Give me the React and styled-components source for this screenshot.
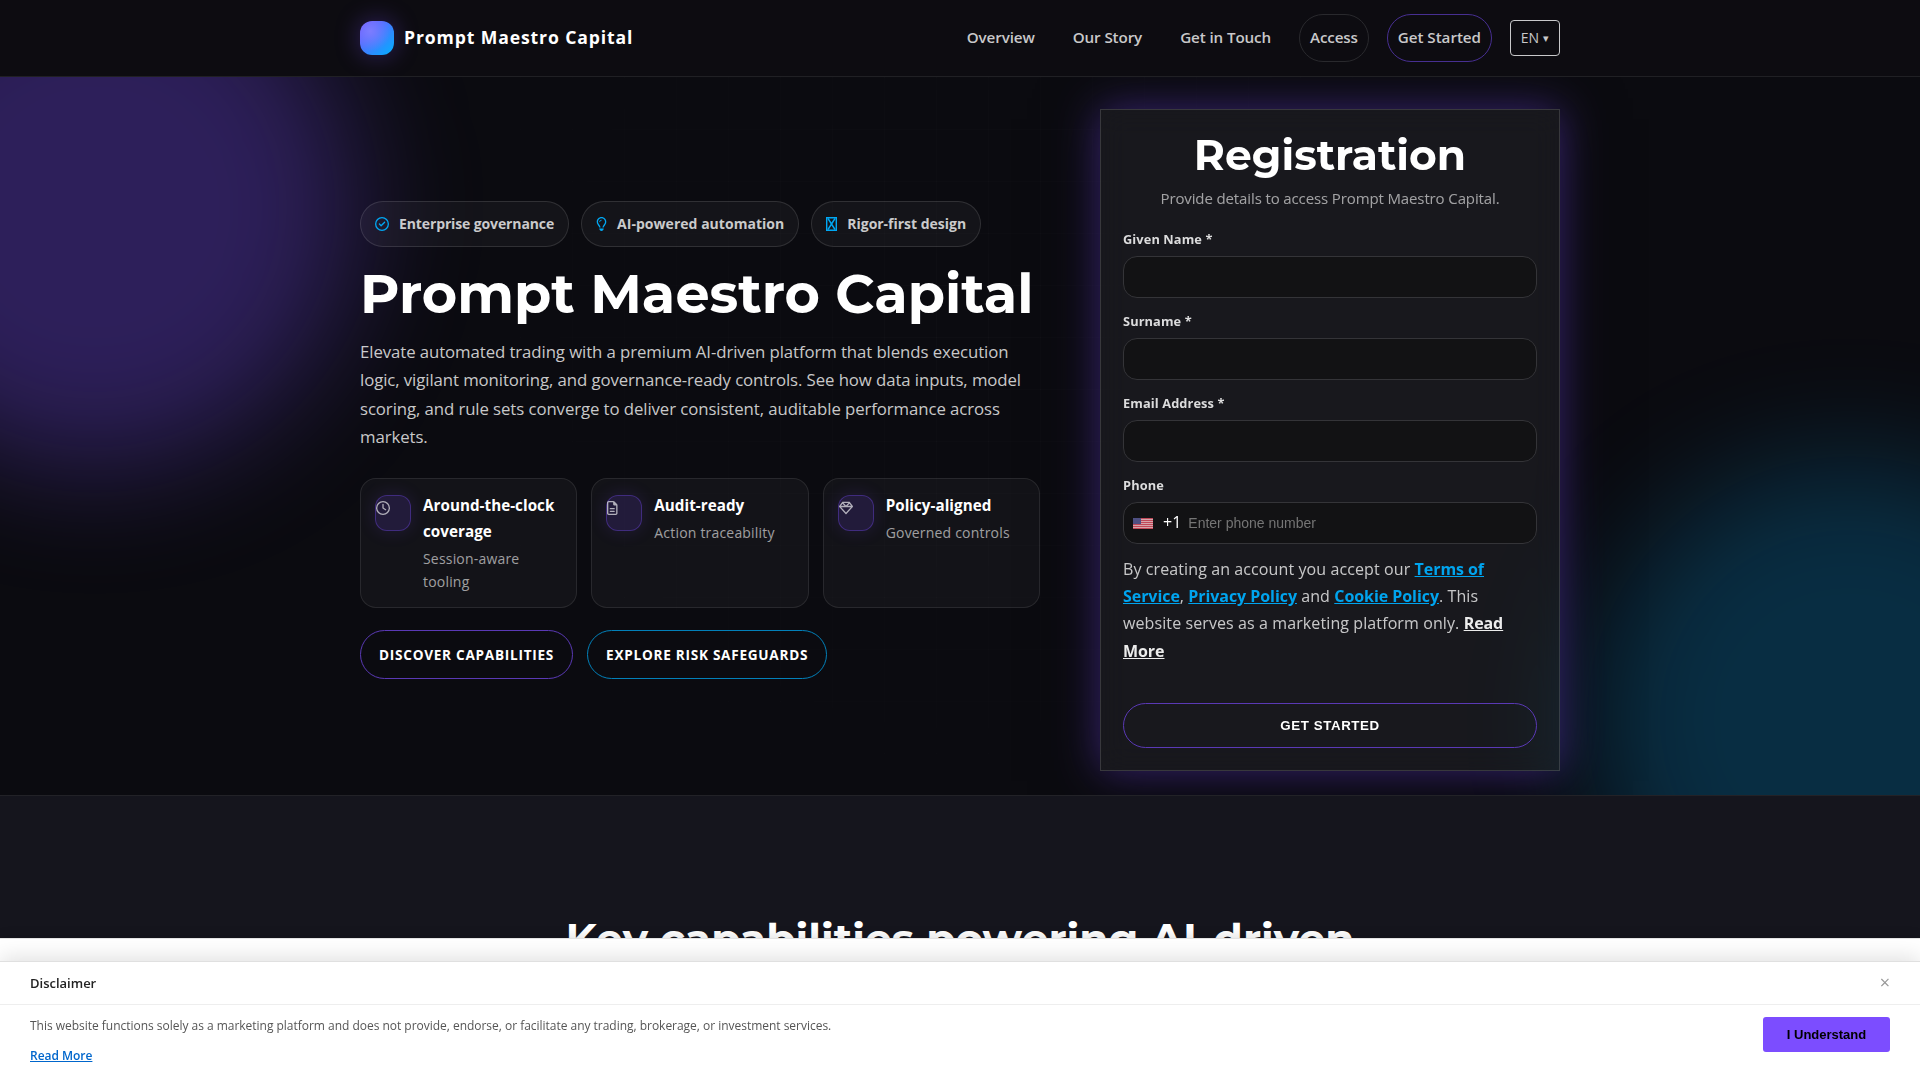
import React from "react";
import styled, { createGlobalStyle } from "styled-components";
import {
  FaRegCircleCheck,
  FaRegLightbulb,
  FaRegClock,
  FaRegFileLines,
  FaRegGem,
} from "react-icons/fa6";

const BODY = '"Open Sans", "Noto Sans", sans-serif';
const HEAD = 'Montserrat, Inter, "Open Sans", sans-serif';
const UI = '"Liberation Sans", Arial, sans-serif';

const GlobalStyle = createGlobalStyle`
  *, *::before, *::after { box-sizing: border-box; }
  html, body { margin: 0; height: 100%; overflow: hidden; }
  body {
    background: #0b0b10;
    color: #fff;
    font-family: ${BODY};
    font-size: 16px;
    line-height: 1.7;
  }
  h1, h2, p { margin: 0; }
`;

const Page = styled.div`
  height: 100vh;
  overflow: hidden;
  display: flex;
  flex-direction: column;
`;

const Header = styled.header`
  flex: none;
  height: 77px;
  border-bottom: 1px solid #202024;
  background: #0d0c11;
`;

const Container = styled.div`
  width: 1200px;
  margin: 0 auto;
`;

const HeaderRow = styled(Container)`
  height: 100%;
  display: flex;
  align-items: center;
  justify-content: space-between;
`;

const Brand = styled.div`
  display: flex;
  align-items: center;
  gap: 10px;
  font-size: 17.6px;
  font-weight: 700;
  letter-spacing: 0.88px;
`;

const BrandMark = styled.span`
  width: 34px;
  height: 34px;
  border-radius: 12px;
  background: radial-gradient(circle at 30% 30%, #7c7dff 0%, transparent 60%),
    linear-gradient(135deg, #7c4dff, #00b0ff);
  box-shadow: 0 0 24px rgba(124, 77, 255, 0.35);
`;

const Nav = styled.nav`
  display: flex;
  align-items: center;
  gap: 18px;
`;

const NavLink = styled.a`
  padding: 10px;
  font-size: 15.2px;
  font-weight: 600;
  letter-spacing: -0.11px;
  color: rgba(255, 255, 255, 0.78);
`;

const NavPill = styled(NavLink)`
  border: 1px solid ${(p) => (p.$accent ? "#472f92" : "#29292d")};
  border-radius: 999px;
  letter-spacing: ${(p) => (p.$accent ? "-0.04px" : "-0.16px")};
`;

const LangButton = styled.button`
  width: 50px;
  height: 36px;
  padding: 0 0 2px;
  display: flex;
  align-items: center;
  justify-content: center;
  gap: 4px;
  border: 1px solid #c8c8ca;
  border-radius: 4px;
  background: transparent;
  color: #c8c8ca;
  font-family: ${BODY};
  font-size: 14px;
`;

const Caret = styled.span`
  font-size: 11px;
`;

const Hero = styled.section`
  position: relative;
  flex: none;
  height: 719px;
  overflow: hidden;
  border-bottom: 1px solid #222227;
  background: #0b0b10;
`;

const Glow = styled.div`
  position: absolute;
  width: 520px;
  height: 520px;
  border-radius: 50%;
  filter: blur(60px);
`;

const VioletGlow = styled(Glow)`
  left: -165px;
  top: -130px;
  background: rgba(124, 77, 255, 0.31);
`;

const BlueGlow = styled(Glow)`
  right: -190px;
  bottom: -185px;
  background: rgba(0, 176, 255, 0.21);
`;

const GridLines = styled.div`
  position: absolute;
  inset: 0;
  background-image: linear-gradient(rgba(255, 255, 255, 0.016) 1px, transparent 1px),
    linear-gradient(90deg, rgba(255, 255, 255, 0.016) 1px, transparent 1px);
  background-size: 52px 52px;
  mask-image: radial-gradient(circle at 50% 35%, #000 0%, transparent 60%);
`;

const HeroRow = styled(Container)`
  position: relative;
  height: 100%;
  padding: 32px 0 24px;
  display: grid;
  grid-template-columns: 680px 460px;
  gap: 60px;
  align-items: center;
`;

const Intro = styled.div`
  display: flex;
  flex-direction: column;
`;

const Badges = styled.div`
  display: flex;
  gap: 12px;
`;

const Badge = styled.span`
  display: flex;
  align-items: center;
  gap: 10px;
  padding: 10px 14px;
  border: 1px solid rgba(255, 255, 255, 0.12);
  border-radius: 999px;
  background: rgba(255, 255, 255, 0.04);
  color: rgba(255, 255, 255, 0.78);
  font-size: 14px;
  font-weight: 700;
  letter-spacing: ${(p) => p.$tracking}px;
  white-space: nowrap;

  svg {
    color: #00a8f4;
    flex: none;
  }
`;

const Title = styled.h1`
  margin: 14px 0 12px;
  height: 65px;
  font-family: ${HEAD};
  font-size: 54.08px;
  font-weight: 700;
  line-height: 66px;
  white-space: nowrap;
`;

const Lead = styled.p`
  font-size: 16.8px;
  letter-spacing: -0.09px;
  color: rgba(255, 255, 255, 0.78);
`;

const Features = styled.div`
  margin-top: 26px;
  display: grid;
  grid-template-columns: repeat(3, 1fr);
  gap: 14px;
`;

const Feature = styled.div`
  display: flex;
  gap: 12px;
  padding: 14px;
  border: 1px solid rgba(255, 255, 255, 0.09);
  border-radius: 16px;
  background: rgba(255, 255, 255, 0.035);
`;

const FeatureIcon = styled.span`
  flex: none;
  width: 36px;
  height: 36px;
  margin-top: 2px;
  padding-top: 5px;
  display: flex;
  align-items: flex-start;
  border: 1px solid rgba(124, 77, 255, 0.35);
  border-radius: 12px;
  background: rgba(124, 77, 255, 0.15);
  box-shadow: 0 0 18px rgba(124, 77, 255, 0.15);
  color: rgba(255, 255, 255, 0.65);
`;

const FeatureName = styled.div`
  font-size: 15.2px;
  font-weight: 700;
  letter-spacing: 0.04px;
`;

const FeatureNote = styled.div`
  margin-top: 2px;
  font-size: 14px;
  line-height: 23.12px;
  letter-spacing: 0.19px;
  color: rgba(255, 255, 255, 0.6);
`;

const Actions = styled.div`
  margin-top: 22px;
  display: flex;
  gap: 14px;
`;

const ActionLink = styled.a`
  padding: 12px 18px;
  border: 1px solid ${(p) => p.$line};
  border-radius: 999px;
  font-size: 13.6px;
  font-weight: 700;
  letter-spacing: 0.73px;
  text-transform: uppercase;
  white-space: nowrap;
`;

const Card = styled.form`
  height: 662px;
  padding: 22px;
  display: flex;
  flex-direction: column;
  border: 1px solid rgba(255, 255, 255, 0.14);
  background: rgba(255, 255, 255, 0.055);
  backdrop-filter: blur(14px);
  box-shadow: 0 0 40px rgba(124, 77, 255, 0.42), 0 10px 60px rgba(0, 0, 0, 0.5);
`;

const CardTitle = styled.h2`
  height: 47px;
  font-family: ${HEAD};
  font-size: 42.4px;
  font-weight: 700;
  line-height: 46px;
  text-align: center;
`;

const CardNote = styled.p`
  margin: 6px 0 17px;
  font-size: 15px;
  line-height: 26px;
  letter-spacing: -0.12px;
  color: rgba(255, 255, 255, 0.6);
  text-align: center;
`;

const Field = styled.div`
  display: flex;
  flex-direction: column;
  gap: 6px;
  margin-bottom: 12px;
`;

const FieldLabel = styled.label`
  font-size: 12.8px;
  font-weight: 700;
  line-height: 22px;
  letter-spacing: 0.1px;
  color: #dcdcdd;
`;

const InputBox = styled.div`
  display: flex;
  align-items: center;
  height: 42px;
  padding: 0 10px 0 9px;
  border: 1px solid #343438;
  border-radius: 14px;
  background: #121214;
`;

const Input = styled.input`
  flex: 1;
  min-width: 0;
  padding: 0;
  border: 0;
  outline: 0;
  background: transparent;
  color: #fff;
  font-family: ${UI};
  font-size: 14px;
  &::placeholder {
    color: #757575;
  }
`;

const DialCode = styled.span`
  margin: 0 7px 0 10px;
  font-size: 16px;
  color: #fff;
`;

const Consent = styled.p`
  font-size: 16px;
  letter-spacing: 0.1px;
  color: rgba(255, 255, 255, 0.76);
`;

const TextLink = styled.a`
  color: ${(p) => (p.$plain ? "#ececec" : "#00a4ee")};
  font-weight: 700;
  letter-spacing: -0.06px;
  text-decoration: underline;
`;

const Submit = styled.button`
  margin-top: auto;
  flex: none;
  height: 45px;
  border: 1px solid #5a39b5;
  border-radius: 999px;
  background: transparent;
  color: #fff;
  font-family: ${UI};
  font-size: 13.33px;
  font-weight: 700;
  letter-spacing: 0.6px;
  text-transform: uppercase;
`;

const Capabilities = styled.section`
  flex: none;
  height: 284px;
  padding-top: 119px;
  background: #15151d;
  text-align: center;
`;

const SectionTitle = styled.h2`
  font-family: ${HEAD};
  font-size: 42.4px;
  font-weight: 700;
  line-height: 48px;
`;

const BottomSheet = styled.aside`
  position: fixed;
  left: 0;
  right: 0;
  bottom: 0;
  height: 142px;
  padding-top: 22px;
  border-top: 1px solid #e4e4e4;
  background: #fff;
  box-shadow: 0 -2px 10px rgba(0, 0, 0, 0.12);
`;

const Notice = styled.div`
  height: 119px;
  border-top: 1px solid #e0e0e0;
  background: #fff;
  box-shadow: 0 -4px 20px rgba(0, 0, 0, 0.12);
  color: #555;
  font-size: 12px;
`;

const NoticeHead = styled.div`
  height: 43px;
  padding: 0 30px;
  display: flex;
  align-items: center;
  justify-content: space-between;
  border-bottom: 1px solid #eee;
  color: #222;
  font-size: 13px;
  font-weight: 600;
`;

const Close = styled.span`
  padding-bottom: 2px;
  color: #999;
  font-size: 18px;
  font-weight: 400;
  line-height: 1;
`;

const NoticeBody = styled.div`
  padding: 12px 30px 0;
  display: flex;
  justify-content: space-between;
  align-items: flex-start;
`;

const NoticeText = styled.div`
  display: flex;
  flex-direction: column;
  gap: 12px;
  line-height: 18px;
  letter-spacing: -0.022px;
`;

const NoticeLink = styled.a`
  color: #0066cc;
  font-weight: 600;
  text-decoration: underline;
`;

const Accept = styled.button`
  width: 127px;
  height: 35px;
  border: 0;
  border-radius: 3px;
  background: #7c4dff;
  color: #000;
  font-family: ${UI};
  font-size: 13px;
  font-weight: 700;
`;

function Flag() {
  return (
    <svg width="20" height="11" viewBox="0 0 20 11" opacity="0.9">
      <rect width="20" height="11" fill="#f4d9dc" />
      {[0, 2, 4, 6, 8, 10].map((y) => (
        <rect key={y} y={y} width="20" height="1" fill="#d0475a" />
      ))}
      <rect width="20" height="11" fill="#d9616f" opacity="0.3" />
      <rect width="8" height="6" fill="#55568f" />
    </svg>
  );
}

function CrossedBox({ style }) {
  return (
    <svg viewBox="0 0 11 14" style={style} fill="none" stroke="currentColor">
      <path strokeWidth="1.4" d="M0.7 0.7H10.3V13.3H0.7Z" />
      <path strokeWidth="1.4" d="M2 1.5L9 12.5M9 1.5L2 12.5" />
    </svg>
  );
}

const badges = [
  { Icon: FaRegCircleCheck, text: "Enterprise governance", width: 14, tracking: -0.12 },
  { Icon: FaRegLightbulb, text: "AI-powered automation", width: 11, tracking: 0.03 },
  { Icon: CrossedBox, text: "Rigor-first design", width: 11, tracking: -0.02 },
];

const features = [
  [FaRegClock, "Around-the-clock coverage", "Session-aware tooling", 14],
  [FaRegFileLines, "Audit-ready", "Action traceability", 10.5],
  [FaRegGem, "Policy-aligned", "Governed controls", 14],
];

export default function App() {
  return (
    <Page>
      <GlobalStyle />
      <Header>
        <HeaderRow>
          <Brand>
            <BrandMark />
            Prompt Maestro Capital
          </Brand>
          <Nav>
            <NavLink>Overview</NavLink>
            <NavLink>Our Story</NavLink>
            <NavLink>Get in Touch</NavLink>
            <NavPill>Access</NavPill>
            <NavPill $accent>Get Started</NavPill>
            <LangButton>
              EN <Caret>▾</Caret>
            </LangButton>
          </Nav>
        </HeaderRow>
      </Header>

      <Hero>
        <VioletGlow />
        <BlueGlow />
        <GridLines />
        <HeroRow>
          <Intro>
            <Badges>
              {badges.map(({ Icon, text, width, tracking }) => (
                <Badge key={text} $tracking={tracking}>
                  <Icon style={{ width, height: 14 }} />
                  {text}
                </Badge>
              ))}
            </Badges>
            <Title>Prompt Maestro Capital</Title>
            <Lead>
              Elevate automated trading with a premium AI-driven platform that blends execution
              logic, vigilant monitoring, and governance-ready controls. See how data inputs, model
              scoring, and rule sets converge to deliver consistent, auditable performance across
              markets.
            </Lead>
            <Features>
              {features.map(([Icon, name, note, w]) => (
                <Feature key={name}>
                  <FeatureIcon>
                    <Icon style={{ width: w, height: 14 }} />
                  </FeatureIcon>
                  <div>
                    <FeatureName>{name}</FeatureName>
                    <FeatureNote>{note}</FeatureNote>
                  </div>
                </Feature>
              ))}
            </Features>
            <Actions>
              <ActionLink $line="#5a39b5">Discover capabilities</ActionLink>
              <ActionLink $line="#0280b9">Explore risk safeguards</ActionLink>
            </Actions>
          </Intro>

          <Card>
            <CardTitle>Registration</CardTitle>
            <CardNote>Provide details to access Prompt Maestro Capital.</CardNote>
            {["Given Name *", "Surname *", "Email Address *"].map((label) => (
              <Field key={label}>
                <FieldLabel>{label}</FieldLabel>
                <InputBox>
                  <Input />
                </InputBox>
              </Field>
            ))}
            <Field>
              <FieldLabel>Phone</FieldLabel>
              <InputBox>
                <Flag />
                <DialCode>+1</DialCode>
                <Input placeholder="Enter phone number" />
              </InputBox>
            </Field>
            <Consent>
              By creating an account you accept our <TextLink>Terms of Service</TextLink>,{" "}
              <TextLink>Privacy Policy</TextLink> and <TextLink>Cookie Policy</TextLink>. This
              website serves as a marketing platform only. <TextLink $plain>Read More</TextLink>
            </Consent>
            <Submit type="button">Get Started</Submit>
          </Card>
        </HeroRow>
      </Hero>

      <Capabilities>
        <SectionTitle>Key capabilities powering AI-driven</SectionTitle>
      </Capabilities>

      <BottomSheet>
        <Notice>
          <NoticeHead>
            Disclaimer
            <Close>×</Close>
          </NoticeHead>
          <NoticeBody>
            <NoticeText>
              <span>
                This website functions solely as a marketing platform and does not provide, endorse,
                or facilitate any trading, brokerage, or investment services.
              </span>
              <NoticeLink>Read More</NoticeLink>
            </NoticeText>
            <Accept>I Understand</Accept>
          </NoticeBody>
        </Notice>
      </BottomSheet>
    </Page>
  );
}
